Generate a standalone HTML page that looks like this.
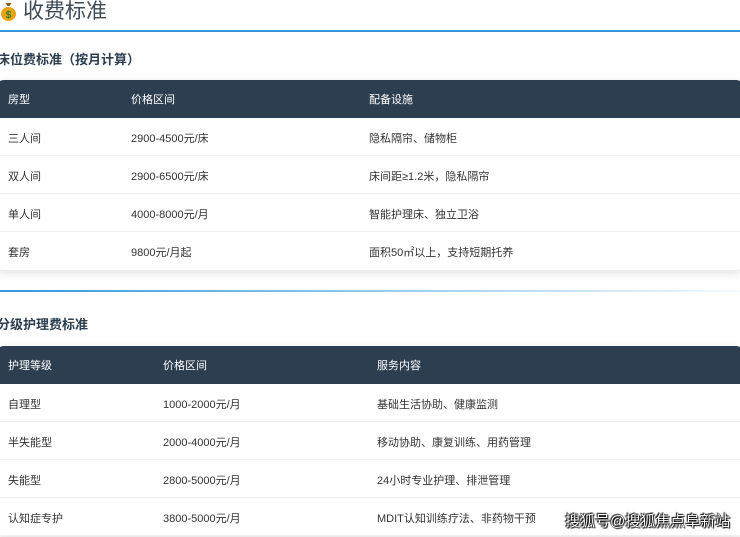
<!DOCTYPE html>
<html><head><meta charset="utf-8"><style>
*{margin:0;padding:0;box-sizing:border-box}
body{width:740px;height:537px;overflow:hidden;background:#fff;font-family:"Liberation Sans","Noto Sans CJK SC",sans-serif;position:relative}
.t{position:absolute;left:0;top:-3px;font-size:21px;color:#3d4a57;height:30px;line-height:30px}
.coin{display:inline-block;width:17px;height:20px;vertical-align:-3px;margin-right:6px}
.bl{position:absolute;left:0;top:30px;width:740px;height:2px;background:#3498db}
h3{position:absolute;left:-3px;font-size:13px;font-weight:bold;color:#2c3e50}
.tb{position:absolute;left:-4px;width:748px;border-radius:8px;overflow:hidden;box-shadow:0 3px 10px rgba(0,0,0,.12);background:#fff}
.r{height:38px;border-bottom:1px solid #eceff2;font-size:11px;color:#333;position:relative}
.r span{position:absolute;top:2px;line-height:38px}
.h span{top:1px}
.h{background:#2c3e50;color:#fff;border:none}
.div{position:absolute;left:0;top:290px;width:740px;height:2px;background:linear-gradient(90deg,#3498db,rgba(52,152,219,0.05))}
.wm{position:absolute;left:565px;top:510px;font-size:15px;color:#fff;text-shadow:0 0 1px #000,0 0 1px #000,1px 1px 1px #000,-1px -1px 1px #000}
</style></head><body>
<div class="t"><svg class="coin" viewBox="0 0 16 20"><path d="M5 2h6l-2 3h-2z" fill="#8a5a1a"/><ellipse cx="8" cy="13" rx="7.5" ry="7" fill="#e8a317"/><text x="8" y="17" font-size="10" text-anchor="middle" fill="#2e7d32" font-weight="bold">$</text></svg>收费标准</div>
<div class="bl"></div>
<h3 style="top:49px">床位费标准（按月计算）</h3>
<div class="tb" style="top:80px">
<div class="r h"><span style="left:12px">房型</span><span style="left:135px">价格区间</span><span style="left:373px">配备设施</span></div>
<div class="r"><span style="left:12px">三人间</span><span style="left:135px">2900-4500元/床</span><span style="left:373px">隐私隔帘、储物柜</span></div>
<div class="r"><span style="left:12px">双人间</span><span style="left:135px">2900-6500元/床</span><span style="left:373px">床间距≥1.2米，隐私隔帘</span></div>
<div class="r"><span style="left:12px">单人间</span><span style="left:135px">4000-8000元/月</span><span style="left:373px">智能护理床、独立卫浴</span></div>
<div class="r" style="border:none"><span style="left:12px">套房</span><span style="left:135px">9800元/月起</span><span style="left:373px">面积50㎡以上，支持短期托养</span></div>
</div>
<div class="div"></div>
<h3 style="top:314px">分级护理费标准</h3>
<div class="tb" style="top:346px">
<div class="r h"><span style="left:12px">护理等级</span><span style="left:167px">价格区间</span><span style="left:381px">服务内容</span></div>
<div class="r"><span style="left:12px">自理型</span><span style="left:167px">1000-2000元/月</span><span style="left:381px">基础生活协助、健康监测</span></div>
<div class="r"><span style="left:12px">半失能型</span><span style="left:167px">2000-4000元/月</span><span style="left:381px">移动协助、康复训练、用药管理</span></div>
<div class="r"><span style="left:12px">失能型</span><span style="left:167px">2800-5000元/月</span><span style="left:381px">24小时专业护理、排泄管理</span></div>
<div class="r"><span style="left:12px">认知症专护</span><span style="left:167px">3800-5000元/月</span><span style="left:381px">MDIT认知训练疗法、非药物干预</span></div>
</div>
<div class="wm">搜狐号@搜狐焦点阜新站</div>
</body></html>
